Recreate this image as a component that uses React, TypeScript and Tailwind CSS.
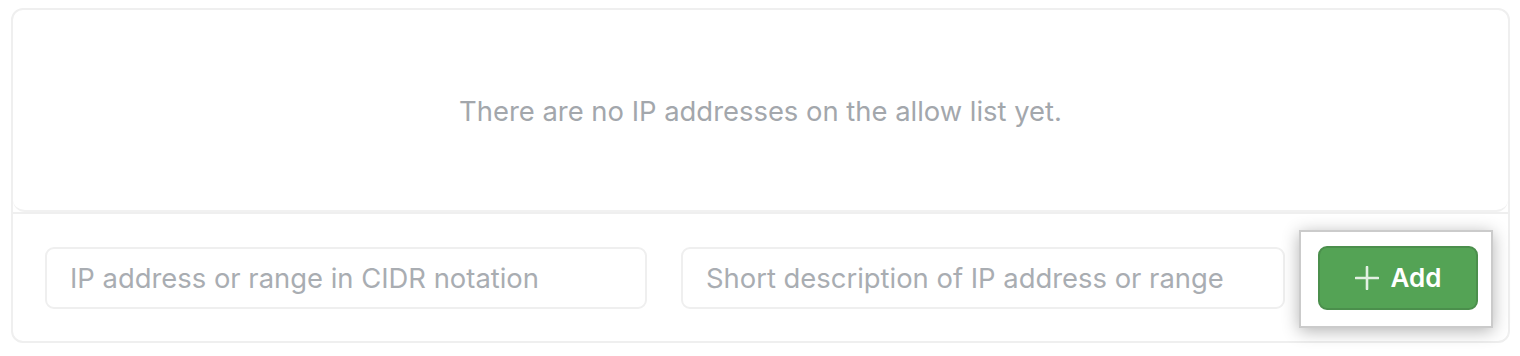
import React from "react"

const font = { fontFamily: "Inter, 'Noto Sans', sans-serif" }

const PlusIcon = () => (
	<svg width="24" height="24" viewBox="0 0 24 24" className="shrink-0">
		<path d="M12 1v22M1 12h22" stroke="#e3f0e3" strokeWidth="2.6" strokeLinecap="round" />
	</svg>
)

export default function App() {
	return (
		<div className="bg-white w-[1520px] h-[356px] pl-[11px] pt-[8px]" style={font}>
			<div className="w-[1499px] h-[335px] rounded-[12px] border-2 border-[#efefef] flex flex-col">
				<div className="h-[202px] rounded-b-[12px] border-b-2 border-[#f1f1f1] flex items-center justify-center pt-[3px]">
					<p className="text-[27.4px] text-[#a3a7ac]">There are no IP addresses on the allow list yet.</p>
				</div>
				<div className="flex-1 border-t-2 border-[#efefef] flex items-center pl-[32px]">
					<input
						className="w-[602px] h-[62px] rounded-[9px] border-2 border-[#efefef] px-[23px] text-[27.4px] outline-none placeholder:text-[#a9adb2]"
						placeholder="IP address or range in CIDR notation"
					/>
					<input
						className="ml-[34px] w-[604px] h-[62px] rounded-[9px] border-2 border-[#efefef] px-[23px] text-[27.4px] outline-none placeholder:text-[#a9adb2]"
						placeholder="Short description of IP address or range"
					/>
					<div className="ml-[14px] mt-[2px] bg-white border-2 border-[#cbcbcb] shadow-[0_3px_16px_rgba(0,0,0,0.3)] pl-[17px] pr-[13px] pt-[14px] pb-[16px]">
						<button className="w-[160px] h-[64px] rounded-[9px] bg-[#54a355] border-2 border-[#4b8f4c] flex items-center justify-center gap-[12px] text-white text-[26px] font-semibold">
							<PlusIcon />
							<span>Add</span>
						</button>
					</div>
				</div>
			</div>
		</div>
	)
}
